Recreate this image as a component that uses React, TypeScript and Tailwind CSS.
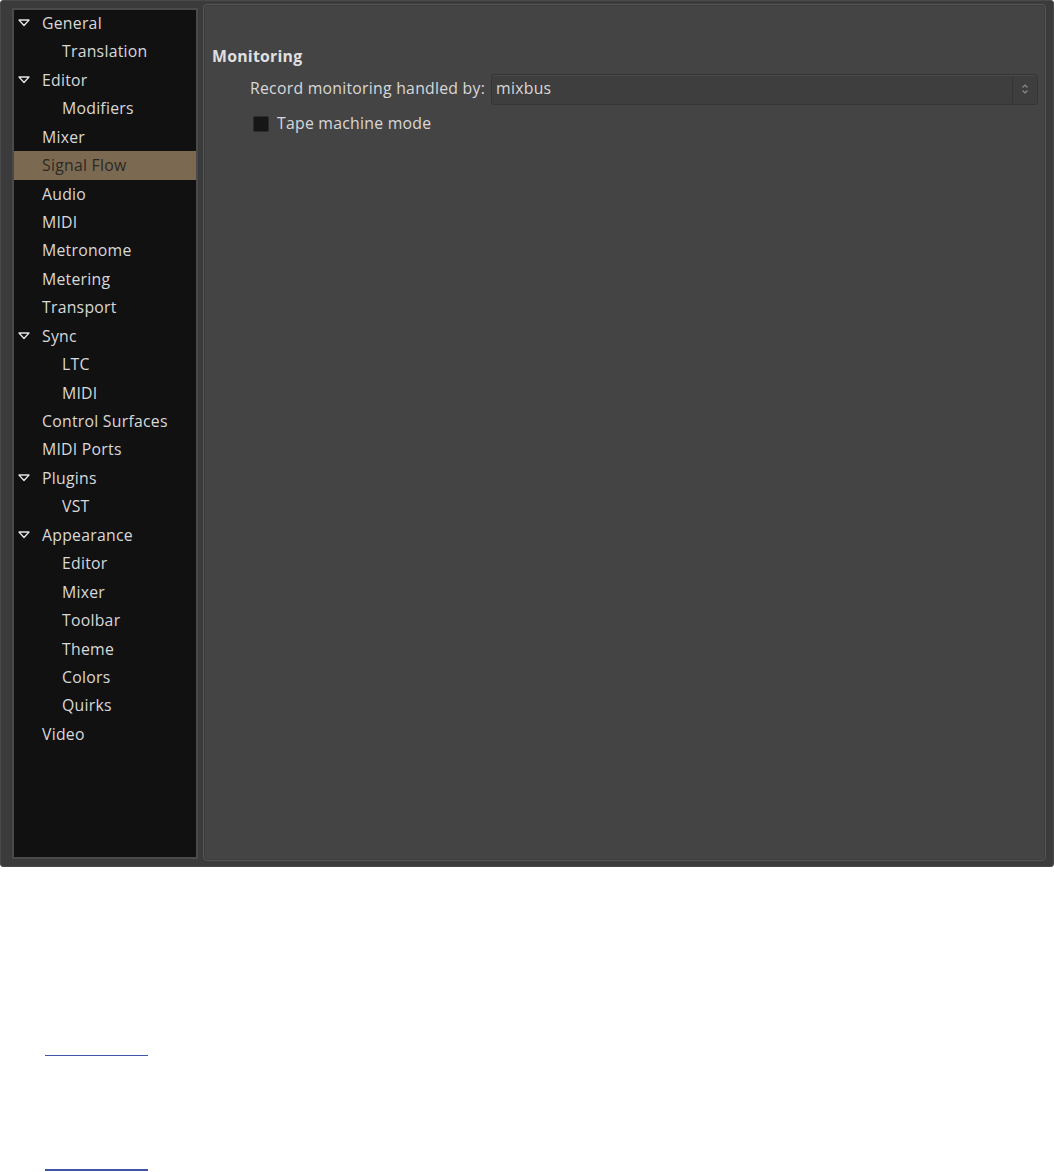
import React from "react";

type Item = { label: string; depth: 0 | 1; expander?: boolean; selected?: boolean };

const items: Item[] = [
  { label: "General", depth: 0, expander: true },
  { label: "Translation", depth: 1 },
  { label: "Editor", depth: 0, expander: true },
  { label: "Modifiers", depth: 1 },
  { label: "Mixer", depth: 0 },
  { label: "Signal Flow", depth: 0, selected: true },
  { label: "Audio", depth: 0 },
  { label: "MIDI", depth: 0 },
  { label: "Metronome", depth: 0 },
  { label: "Metering", depth: 0 },
  { label: "Transport", depth: 0 },
  { label: "Sync", depth: 0, expander: true },
  { label: "LTC", depth: 1 },
  { label: "MIDI", depth: 1 },
  { label: "Control Surfaces", depth: 0 },
  { label: "MIDI Ports", depth: 0 },
  { label: "Plugins", depth: 0, expander: true },
  { label: "VST", depth: 1 },
  { label: "Appearance", depth: 0, expander: true },
  { label: "Editor", depth: 1 },
  { label: "Mixer", depth: 1 },
  { label: "Toolbar", depth: 1 },
  { label: "Theme", depth: 1 },
  { label: "Colors", depth: 1 },
  { label: "Quirks", depth: 1 },
  { label: "Video", depth: 0 },
];

function Expander() {
  return (
    <svg width="12" height="8" viewBox="0 0 12 8" className="absolute left-[4px] top-[10px]">
      <polygon points="1,1 11,1 6,6.5" fill="none" stroke="#e4e4e4" strokeWidth="1.3" strokeLinejoin="round" />
    </svg>
  );
}

function SidebarRow({ item }: { item: Item }) {
  return (
    <div
      className={
        "relative h-[28.44px] flex items-center pt-[1px] " +
        (item.selected ? "bg-[#7b6a51] text-[#2c2925]" : "text-[#d8d8d8]")
      }
    >
      {item.expander && <Expander />}
      <span className={item.depth === 1 ? "pl-[48px]" : "pl-[28px]"}>{item.label}</span>
    </div>
  );
}

function UpDown() {
  return (
    <svg width="10" height="14" viewBox="0 0 10 14">
      <polyline points="2.5,5.5 5,3 7.5,5.5" fill="none" stroke="#8a8a8a" strokeWidth="1.2" />
      <polyline points="2.5,8.5 5,11 7.5,8.5" fill="none" stroke="#8a8a8a" strokeWidth="1.2" />
    </svg>
  );
}

export default function App() {
  return (
    <div
      className="w-[1054px] h-[1172px] bg-white text-[15.8px] tracking-[0.25px]"
      style={{ fontFamily: '"Open Sans", "Noto Sans", sans-serif' }}
    >
      {/* preferences window */}
      <div className="h-[867px] bg-[#3c3b3c] border border-[#4a494a] rounded-[3px] flex items-start pl-[11px] pr-[7px]">
        {/* category tree */}
        <div className="mt-[7px] w-[186px] h-[851px] border-2 border-[#4b4a4b] bg-[#111111] overflow-hidden">
          <div className="-mt-[1px]">
            {items.map((it, i) => (
              <SidebarRow key={i} item={it} />
            ))}
          </div>
        </div>

        {/* settings page */}
        <div className="ml-[5px] mt-[3px] flex-1 h-[857px] rounded-[4px] border border-[#565556] bg-[#454445] shadow-[inset_0_0_0_1px_#3d3c3d]">
          <div className="pl-[8px] pt-[40px] font-bold text-[#e0e0e0]">Monitoring</div>
          <div className="flex items-center pl-[46px] pr-[7px] mt-[5px]">
            <span className="text-[#d8d8d8] mr-[6px]">Record monitoring handled by:</span>
            <div className="flex-1 h-[31px] flex items-center rounded-[3px] border border-[#363536] bg-[#3f3e3f] shadow-[inset_0_1px_0_#4a494a]">
              <span className="flex-1 pl-[4px] text-[#d8d8d8]">mixbus</span>
              <div className="w-[25px] h-[27px] border-l border-[#363536] flex items-center justify-center">
                <UpDown />
              </div>
            </div>
          </div>
          <div className="flex items-center pl-[49px] mt-[7px]">
            <div className="w-[16px] h-[16px] rounded-[2px] bg-[#161616] border border-[#2c2b2c]" />
            <span className="ml-[8px] text-[#d8d8d8]">Tape machine mode</span>
          </div>
        </div>
      </div>

      {/* link underlines below the window */}
      <div className="ml-[45px] mt-[188px] w-[103px] h-[1px] bg-[#3f56a8]" />
      <div className="ml-[45px] mt-[113px] w-[103px] h-[2px] bg-[#3f56a8]" />
    </div>
  );
}
